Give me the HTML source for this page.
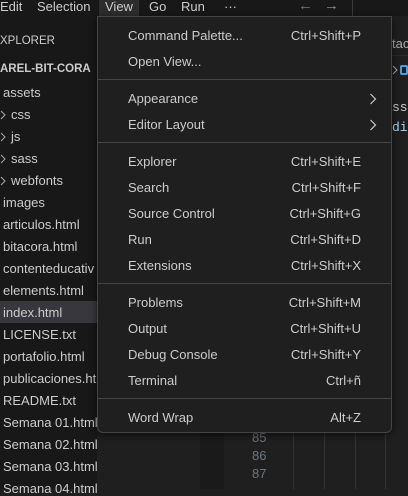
<!DOCTYPE html>
<html><head><style>
*{margin:0;padding:0;box-sizing:border-box}
body{width:408px;height:489px;overflow:hidden;background:#1f1f1f;font-family:"Liberation Sans",sans-serif;color:#ccc;position:relative;font-size:13px}
.t{position:absolute;white-space:nowrap}
#title{position:absolute;left:0;top:0;width:408px;height:16px;background:#181818}
#side{position:absolute;left:0;top:16px;width:97px;height:473px;background:#181818}
.menu{position:absolute;left:97px;top:16px;width:295px;height:417px;background:#1f1f1f;border:1px solid #454545;border-radius:0 0 6px 6px;box-shadow:0 2px 8px rgba(0,0,0,.6)}
.mi{position:absolute;left:30px;color:#ccc;font-size:13px}
.sc{position:absolute;right:30px;color:#ccc;font-size:13px}
.sep{position:absolute;left:0;right:0;height:1px;background:#454545}
.f{position:absolute;left:3px;font-size:13px;color:#ccc}
.ch{position:absolute}
</style></head><body>
<div id="title"></div>
<div class="t" style="left:0;top:-1px;font-size:13px">Edit</div>
<div class="t" style="left:37px;top:-1px">Selection</div>
<div style="position:absolute;left:99px;top:0;width:40px;height:16px;background:#2d2d2d"></div>
<div class="t" style="left:105px;top:-1px">View</div>
<div class="t" style="left:149px;top:-1px">Go</div>
<div class="t" style="left:181px;top:-1px">Run</div>
<div class="t" style="left:224px;top:-1px">···</div>
<div class="t" style="left:298px;top:-3px;color:#777;font-size:15px">←</div>
<div class="t" style="left:324px;top:-3px;color:#888;font-size:15px">→</div>
<div style="position:absolute;left:352px;top:0;width:1px;height:16px;background:#3a3a3a"></div>
<div id="side"></div>
<div class="t" style="left:0;top:35px;font-size:11.5px">XPLORER</div>
<div class="t" style="left:0;top:63px;font-size:11.5px;font-weight:bold">AREL-BIT-CORA</div>
<div class="f" style="top:85px">assets</div>
<svg class="ch" style="left:0;top:110px" width="6" height="10"><path d="M1 1l4 4-4 4" stroke="#aaa" fill="none"/></svg><div class="f" style="top:107px;left:11px">css</div>
<svg class="ch" style="left:0;top:132px" width="6" height="10"><path d="M1 1l4 4-4 4" stroke="#aaa" fill="none"/></svg><div class="f" style="top:129px;left:11px">js</div>
<svg class="ch" style="left:0;top:154px" width="6" height="10"><path d="M1 1l4 4-4 4" stroke="#aaa" fill="none"/></svg><div class="f" style="top:151px;left:11px">sass</div>
<svg class="ch" style="left:0;top:176px" width="6" height="10"><path d="M1 1l4 4-4 4" stroke="#aaa" fill="none"/></svg><div class="f" style="top:173px;left:11px">webfonts</div>
<div class="f" style="top:195px">images</div>
<div class="f" style="top:217px">articulos.html</div>
<div class="f" style="top:239px">bitacora.html</div>
<div class="f" style="top:261px">contenteducativ</div>
<div class="f" style="top:283px">elements.html</div>
<div style="position:absolute;left:0;top:301px;width:97px;height:22px;background:#37373d"></div>
<div class="f" style="top:305px">index.html</div>
<div class="f" style="top:327px">LICENSE.txt</div>
<div class="f" style="top:349px">portafolio.html</div>
<div class="f" style="top:371px">publicaciones.ht</div>
<div class="f" style="top:393px">README.txt</div>
<div class="f" style="top:415px">Semana 01.html</div>
<div class="f" style="top:437px">Semana 02.html</div>
<div class="f" style="top:459px">Semana 03.html</div>
<div class="f" style="top:481px">Semana 04.html</div>
<div style="position:absolute;left:392px;top:30px;width:16px;height:26px;background:#1f1f1f;border-bottom:1px solid #2b2b2b"></div>
<div class="t" style="left:392px;top:36px;color:#aaa">taco</div>
<svg class="ch" style="left:392px;top:65px" width="6" height="10"><path d="M1 1l4 4-4 4" stroke="#aaa" fill="none"/></svg>
<div style="position:absolute;left:400px;top:65px;width:8px;height:10px;border:2px solid #4a9fe0;border-radius:2px"></div>
<div class="t" style="left:392px;top:100px;color:#ccc;font-family:'Liberation Mono',monospace">ss</div>
<div class="t" style="left:392px;top:120px;color:#9cdcfe;font-family:'Liberation Mono',monospace">di</div>
<div style="position:absolute;left:224px;top:433px;width:168px;height:56px;background:#1f1f1f"></div>
<div style="position:absolute;left:200px;top:433px;width:24px;height:56px;background:#1a1a1a"></div>
<div style="position:absolute;left:293px;top:433px;width:1px;height:56px;background:#333"></div>
<div style="position:absolute;left:324px;top:433px;width:1px;height:56px;background:#333"></div>
<div style="position:absolute;left:355px;top:433px;width:1px;height:56px;background:#333"></div>
<div style="position:absolute;left:385px;top:433px;width:1px;height:56px;background:#333"></div>
<div class="t" style="left:252px;top:430px;color:#6e7681">85</div>
<div class="t" style="left:252px;top:448px;color:#6e7681">86</div>
<div class="t" style="left:252px;top:466px;color:#6e7681">87</div>
<div class="menu">
<div class="mi" style="top:11px">Command Palette...</div><div class="sc" style="top:11px">Ctrl+Shift+P</div>
<div class="mi" style="top:37px">Open View...</div>
<div class="sep" style="top:62px"></div>
<div class="mi" style="top:74px">Appearance</div>
<svg class="ch" style="left:271px;top:76px" width="8" height="12"><path d="M1.5 1l5 5-5 5" stroke="#ccc" stroke-width="1.2" fill="none"/></svg>
<div class="mi" style="top:100px">Editor Layout</div>
<svg class="ch" style="left:271px;top:102px" width="8" height="12"><path d="M1.5 1l5 5-5 5" stroke="#ccc" stroke-width="1.2" fill="none"/></svg>
<div class="sep" style="top:125px"></div>
<div class="mi" style="top:137px">Explorer</div><div class="sc" style="top:137px">Ctrl+Shift+E</div>
<div class="mi" style="top:163px">Search</div><div class="sc" style="top:163px">Ctrl+Shift+F</div>
<div class="mi" style="top:189px">Source Control</div><div class="sc" style="top:189px">Ctrl+Shift+G</div>
<div class="mi" style="top:215px">Run</div><div class="sc" style="top:215px">Ctrl+Shift+D</div>
<div class="mi" style="top:241px">Extensions</div><div class="sc" style="top:241px">Ctrl+Shift+X</div>
<div class="sep" style="top:266px"></div>
<div class="mi" style="top:278px">Problems</div><div class="sc" style="top:278px">Ctrl+Shift+M</div>
<div class="mi" style="top:304px">Output</div><div class="sc" style="top:304px">Ctrl+Shift+U</div>
<div class="mi" style="top:330px">Debug Console</div><div class="sc" style="top:330px">Ctrl+Shift+Y</div>
<div class="mi" style="top:356px">Terminal</div><div class="sc" style="top:356px">Ctrl+ñ</div>
<div class="sep" style="top:381px"></div>
<div class="mi" style="top:393px">Word Wrap</div><div class="sc" style="top:393px">Alt+Z</div>
</div>
</body></html>
